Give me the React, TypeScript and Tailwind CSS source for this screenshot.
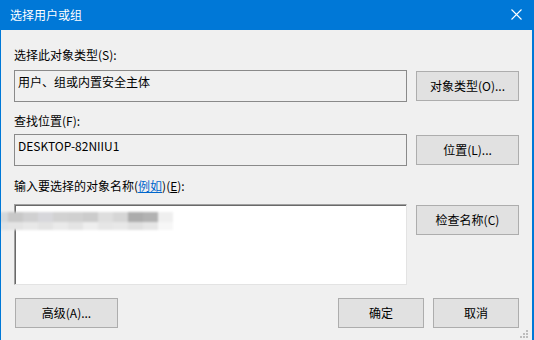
import React from "react";

const font = { fontFamily: '"Noto Sans CJK SC", "Noto Sans", sans-serif' };

const mosaicTop = ["#d3d8dc", "#c8c8c8", "#d0d0d1", "#d7d7db", "#d2d2d2", "#d0d0d0", "#cccccc", "#dedede", "#d6d6d6", "#acacac", "#b2b2b2", "#efefef"];
const mosaicBottom = ["#dfe3e6", "#e4e4e4", "#e8e8e8", "#e3e3e3", "#eaeaea", "#e4e4e4", "#eeeeee", "#e6e6e6", "#e8e8e8", "#e0e0e0", "#e6e6e6", "#f7f7f7"];

function Btn({ children, className = "" }: { children: React.ReactNode; className?: string }) {
    return (
        <button className={`h-[30px] bg-[#e1e1e1] border border-[#adadad] text-[12px] leading-[16px] text-black flex items-center justify-center ${className}`}>
            {children}
        </button>
    );
}

function TextBox({ children }: { children: React.ReactNode }) {
    return (
        <div className="w-[393px] h-[32px] bg-[#f0f0f0] border border-[#8a8a8a] pl-[3px] pt-[3px] text-[12px] leading-[16px] text-black">
            {children}
        </div>
    );
}

export default function App() {
    return (
        <div className="w-[534px] h-[340px] overflow-hidden bg-[#f0f0f0] border-l border-r-2 border-[#0078d7] select-none" style={font}>
            {/* title bar */}
            <div className="h-[30px] bg-[#0078d7] flex items-center justify-between pl-[9px] pr-[10px]">
                <span className="text-white text-[12px] leading-[16px]">选择用户或组</span>
                <svg width="11" height="11" viewBox="0 0 11 11" className="mt-[-1px]">
                    <path d="M0.5 0.5 L10.5 10.5 M10.5 0.5 L0.5 10.5" stroke="#ffffff" strokeWidth="1.1" />
                </svg>
            </div>

            <div className="pl-[13px] pr-[13px] pt-[17px] text-[12px] leading-[16px] text-black relative">
                <div>选择此对象类型(S):</div>
                <div className="flex items-start mt-[7px]">
                    <TextBox>用户、组或内置安全主体</TextBox>
                    <Btn className="ml-[9px] w-[103px] mt-[1px]">对象类型(O)...</Btn>
                </div>

                <div className="mt-[11px]">查找位置(F):</div>
                <div className="flex items-start mt-[5px]">
                    <TextBox>DESKTOP-82NIIU1</TextBox>
                    <Btn className="ml-[9px] w-[103px] mt-[1px]">位置(L)...</Btn>
                </div>

                <div className="mt-[12px]">
                    输入要选择的对象名称(<span className="text-[#0066cc] underline">例如</span>)(<span className="underline">E</span>):
                </div>
                <div className="flex items-start mt-[10px]">
                    <div className="w-[393px] h-[81px] bg-white border-t border-l border-[#a0a0a0] border-r border-b border-r-[#e3e3e3] border-b-[#e3e3e3] shadow-[inset_1px_1px_0_#696969]" />
                    <Btn className="ml-[9px] w-[103px] mt-[1px]">检查名称(C)</Btn>
                </div>

                {/* blurred entry */}
                <div className="absolute left-[-8px] top-[182px] flex flex-col blur-[1px]">
                    <div className="flex">
                        {mosaicTop.map((c, i) => (
                            <div key={i} className={`w-[15px] h-[10px] ${i === 0 ? "rounded-tl-full" : ""}`} style={{ background: c }} />
                        ))}
                    </div>
                    <div className="flex">
                        {mosaicBottom.map((c, i) => (
                            <div key={i} className={`w-[15px] h-[8px] ${i === 0 ? "rounded-bl-full" : ""}`} style={{ background: c }} />
                        ))}
                    </div>
                </div>

                <div className="flex items-start mt-[13px]">
                    <Btn className="ml-[1px] w-[103px]">高级(A)...</Btn>
                    <div className="flex-1" />
                    <Btn className="w-[86px]">确定</Btn>
                    <Btn className="ml-[9px] w-[86px]">取消</Btn>
                </div>

                {/* size grip */}
                <div className="absolute right-[3px] top-[300px]">
                    <svg width="9" height="9" viewBox="0 0 9 9">
                        <rect x="6" y="0" width="2" height="2" fill="#bdbdbd" />
                        <rect x="3" y="3" width="2" height="2" fill="#bdbdbd" />
                        <rect x="6" y="3" width="2" height="2" fill="#bdbdbd" />
                        <rect x="0" y="6" width="2" height="2" fill="#bdbdbd" />
                        <rect x="3" y="6" width="2" height="2" fill="#bdbdbd" />
                        <rect x="6" y="6" width="2" height="2" fill="#bdbdbd" />
                    </svg>
                </div>
            </div>
        </div>
    );
}
